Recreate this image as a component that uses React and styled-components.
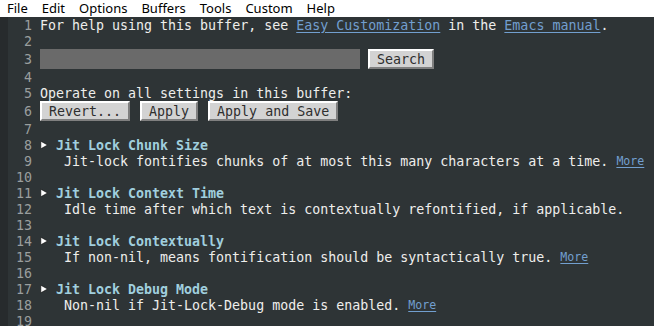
import React from "react";
import styled, { createGlobalStyle } from "styled-components";

const GlobalStyle = createGlobalStyle`
  html, body { margin: 0; padding: 0; height: 100%; overflow: hidden; background: #2e3436; }
  #root { height: 100%; }
`;

const Frame = styled.div`
  display: flex;
  flex-direction: column;
  height: 100%;
`;

const MenuBar = styled.div`
  display: flex;
  gap: 14px;
  align-items: flex-start;
  height: 17px;
  padding-left: 7px;
  background: #ffffff;
  font-family: "Noto Sans", "Open Sans", sans-serif;
  font-size: 13px;
  color: #000;
  flex: none;
`;

const MenuItem = styled.span`
  display: block;
  line-height: 16px;
`;

const Editor = styled.div`
  display: flex;
  flex: 1;
  overflow: hidden;
  background: #2e3436;
`;

const Fringe = styled.div`
  width: 8px;
  flex: none;
  background: #272b2d;
`;

const Body = styled.div`
  display: flex;
  flex-direction: column;
  flex: 1;
  font-family: "DejaVu Sans Mono", monospace;
  font-size: 13.3px;
  color: #eeeeec;
  white-space: pre;
`;

const Line = styled.div`
  display: flex;
  align-items: center;
  height: ${(p) => (p.$tall ? 20 : 16)}px;
  flex: none;
`;

const LineNo = styled.span`
  width: 24px;
  margin-right: 8px;
  text-align: right;
  color: #9a9e9e;
  flex: none;
`;

const Content = styled.span`
  display: flex;
  align-items: center;
`;

const Link = styled.span`
  color: #729fcf;
  text-decoration: underline;
  text-underline-offset: 2px;
`;

const More = styled(Link)`
  font-size: 11.6px;
  margin-left: 8px;
`;

const Field = styled.span`
  display: block;
  width: 320px;
  height: 20px;
  background: #6a6a6a;
  margin-right: 8px;
`;

const Button = styled.span`
  display: inline-flex;
  align-items: center;
  box-sizing: border-box;
  height: 20px;
  padding: 0 7px;
  margin-right: ${(p) => (p.$last ? 0 : 10)}px;
  background: #d3d3d3;
  color: #2e2e2e;
  border: 2px solid;
  border-color: #ffffff #7f7f7f #7f7f7f #ffffff;
`;

const Heading = styled.span`
  font-weight: bold;
  color: #a0cfde;
`;

const Indent = styled.span`
  padding-left: ${(p) => p.$chars * 8}px;
`;

const ArrowIcon = styled.svg`
  display: block;
  margin-right: 8px;
  flex: none;
`;

const Arrow = () => (
  <ArrowIcon width="8" height="16" viewBox="0 0 8 16">
    <polygon points="0.8,4.2 7.6,8 0.8,11.8" fill="#ffffff" stroke="#0a0a0a" strokeWidth="0.6" />
  </ArrowIcon>
);

const settings = [
  {
    name: "Jit Lock Chunk Size",
    doc: "Jit-lock fontifies chunks of at most this many characters at a time.",
    more: true,
  },
  {
    name: "Jit Lock Context Time",
    doc: "Idle time after which text is contextually refontified, if applicable.",
    more: false,
  },
  {
    name: "Jit Lock Contextually",
    doc: "If non-nil, means fontification should be syntactically true.",
    more: true,
  },
  {
    name: "Jit Lock Debug Mode",
    doc: "Non-nil if Jit-Lock-Debug mode is enabled.",
    more: true,
  },
];

export default function App() {
  const rows = [];
  rows.push({
    content: (
      <>
        For help using this buffer, see <Link>Easy Customization</Link> in the{" "}
        <Link>Emacs manual</Link>.
      </>
    ),
  });
  rows.push({ content: null });
  rows.push({
    tall: true,
    content: (
      <>
        <Field />
        <Button $last>Search</Button>
      </>
    ),
  });
  rows.push({ content: null });
  rows.push({ content: "Operate on all settings in this buffer:" });
  rows.push({
    tall: true,
    content: (
      <>
        <Button>Revert...</Button>
        <Button>Apply</Button>
        <Button $last>Apply and Save</Button>
      </>
    ),
  });
  rows.push({ content: null });
  settings.forEach((s) => {
    rows.push({
      content: (
        <>
          <Arrow />
          <Heading>{s.name}</Heading>
        </>
      ),
    });
    rows.push({
      content: (
        <>
          <Indent $chars={3}>{s.doc}</Indent>
          {s.more && <More>More</More>}
        </>
      ),
    });
    rows.push({ content: null });
  });

  return (
    <>
      <GlobalStyle />
      <Frame>
        <MenuBar>
          {["File", "Edit", "Options", "Buffers", "Tools", "Custom", "Help"].map((m) => (
            <MenuItem key={m}>{m}</MenuItem>
          ))}
        </MenuBar>
        <Editor>
          <Fringe />
          <Body>
            {rows.map((r, i) => (
              <Line key={i} $tall={r.tall}>
                <LineNo>{i + 1}</LineNo>
                <Content>{r.content}</Content>
              </Line>
            ))}
          </Body>
        </Editor>
      </Frame>
    </>
  );
}
